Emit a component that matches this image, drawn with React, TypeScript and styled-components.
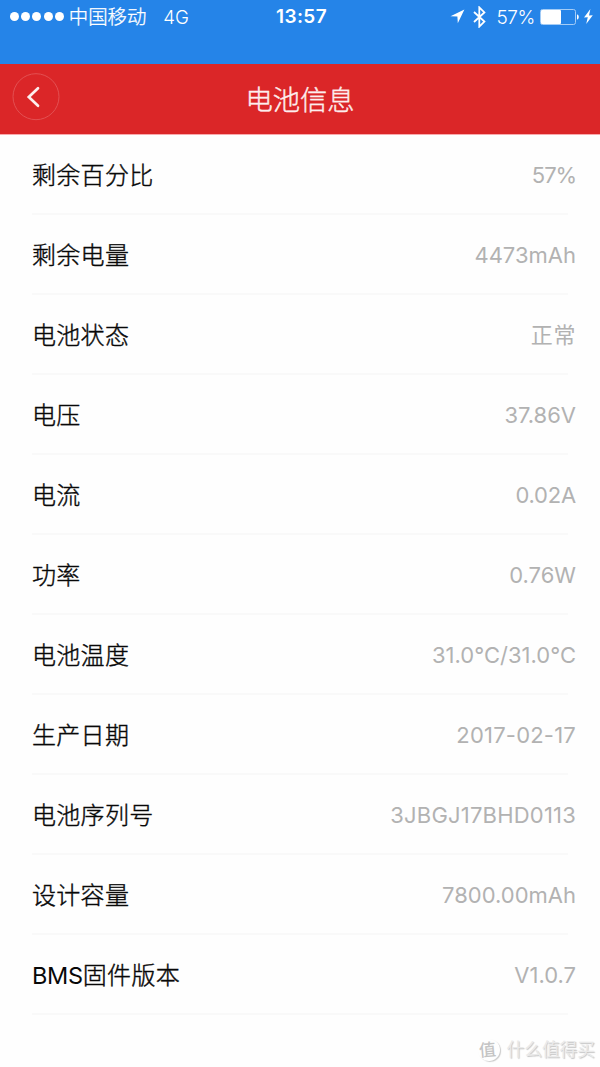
import React from "react";
import styled, { createGlobalStyle } from "styled-components";

const GlobalStyle = createGlobalStyle`
  * { box-sizing: border-box; }
  body {
    margin: 0;
    background: #fefefe;
    font-family: Inter, "Noto Sans CJK SC", sans-serif;
  }
`;

const Screen = styled.main`
  width: 600px;
  height: 1067px;
  display: flex;
  flex-direction: column;
  overflow: hidden;
`;

const StatusBar = styled.header`
  flex: none;
  height: 64px;
  padding: 0 7px 0 10px;
  display: grid;
  grid-template-columns: 1fr auto 1fr;
  align-items: start;
  background: #2584e8;
  color: #fff;
`;

const StatusGroup = styled.div<{ $end?: boolean }>`
  height: 33px;
  display: flex;
  align-items: center;
  justify-content: ${(p) => (p.$end ? "flex-end" : "flex-start")};
`;

const SignalDots = styled.div`
  display: flex;
  gap: 2.2px;
  margin-right: 5px;
`;

const Dot = styled.i`
  width: 9px;
  height: 9px;
  border-radius: 50%;
  background: #fff;
`;

const StatusText = styled.span<{ $size?: number; $gap?: number; $drop?: number; $tracking?: number }>`
  font-size: ${(p) => p.$size ?? 18}px;
  line-height: 33px;
  padding-top: ${(p) => p.$drop ?? 0}px;
  margin-right: ${(p) => p.$gap ?? 0}px;
  letter-spacing: ${(p) => p.$tracking ?? 0}px;
  white-space: nowrap;
  font-weight: 350;
`;

const Carrier = styled(StatusText)`
  font-weight: 300;
  -webkit-text-stroke: 0.3px currentColor;
`;

const Clock = styled.time`
  font-size: 19px;
  line-height: 34px;
  font-weight: 600;
  letter-spacing: 0.4px;
`;

const StatusIcon = styled.svg<{ $gap?: number }>`
  flex: none;
  display: block;
  margin-right: ${(p) => p.$gap ?? 0}px;
`;

const TitleBar = styled.div`
  flex: none;
  height: 71px;
  padding: 0 12px;
  display: grid;
  grid-template-columns: 48px 1fr 48px;
  background: #db2628;
  border-bottom: 1px solid #f9a9ac;
  color: #fdeeee;
`;

const BackButton = styled.button`
  width: 48px;
  height: 48px;
  margin-top: 9px;
  padding: 0;
  border: 0;
  background: none;
`;

const Title = styled.h1`
  margin: 0;
  font-size: 27.3px;
  line-height: 68px;
  font-weight: 300;
  -webkit-text-stroke: 0.4px currentColor;
  text-align: center;
  font-family: "Noto Sans CJK SC", sans-serif;
`;

const List = styled.dl`
  flex: none;
  margin: 0;
  padding: 0 32px;
`;

const Row = styled.div`
  height: 80px;
  display: flex;
  justify-content: space-between;
  border-bottom: 2px solid #f9f9f9;
`;

const Label = styled.dt`
  font-size: 24px;
  line-height: 82px;
  font-weight: 300;
  -webkit-text-stroke: 0.4px currentColor;
  letter-spacing: 0.3px;
  color: #080808;
  white-space: nowrap;
`;

const LatinPart = styled.span`
  font-size: 23.5px;
  font-weight: 400;
  -webkit-text-stroke: 0;
  letter-spacing: -0.3px;
`;

const Value = styled.dd<{ $tracking?: number }>`
  margin: 0 -8px 0 0;
  font-size: 22px;
  line-height: 80px;
  letter-spacing: ${(p) => p.$tracking ?? 0}px;
  color: #b2b2b2;
  white-space: nowrap;
`;

const Watermark = styled.footer`
  display: flex;
  align-items: center;
  justify-content: flex-end;
  gap: 7px;
  height: 24px;
  margin-top: 23px;
  padding-right: 5px;
  color: #eaeaea;
  text-shadow: 1px 1px 1px #c4c4c4;
  font-size: 17.7px;
  line-height: 24px;
`;

const WatermarkSeal = styled.span`
  width: 22px;
  height: 22px;
  border-radius: 50%;
  box-shadow: 1px 1px 1px #ccc;
  display: flex;
  align-items: center;
  justify-content: center;
  padding-right: 3px;
  font-size: 17px;
  line-height: 20px;
  font-weight: 500;
  color: #c4c4c4;
  text-shadow: none;
  transform: rotate(-5deg);
`;

interface Reading {
  prefix?: string;
  label: string;
  value: string;
  tracking?: number;
}

const readings: Reading[] = [
  { label: "剩余百分比", value: "57%", tracking: -1.1 },
  { label: "剩余电量", value: "4473mAh" },
  { label: "电池状态", value: "正常", tracking: 0.6 },
  { label: "电压", value: "37.86V" },
  { label: "电流", value: "0.02A", tracking: -0.2 },
  { label: "功率", value: "0.76W" },
  { label: "电池温度", value: "31.0°C/31.0°C" },
  { label: "生产日期", value: "2017-02-17", tracking: 0.2 },
  { label: "电池序列号", value: "3JBGJ17BHD0113", tracking: 0.2 },
  { label: "设计容量", value: "7800.00mAh" },
  { prefix: "BMS", label: "固件版本", value: "V1.0.7" },
];

export default function App() {
  return (
    <Screen>
      <GlobalStyle />
      <StatusBar>
        <StatusGroup>
          <SignalDots>
            {[0, 1, 2, 3, 4].map((n) => (
              <Dot key={n} />
            ))}
          </SignalDots>
          <Carrier $size={19.4} $gap={17} $drop={2}>中国移动</Carrier>
          <StatusText $size={18.7} $drop={1}>4G</StatusText>
        </StatusGroup>
        <Clock>13:57</Clock>
        <StatusGroup $end>
          <StatusIcon width="15" height="15" viewBox="0 0 15 15" $gap={8}>
            <path d="M14.4 0.6 L0.5 7.3 L7.4 7.6 L7.8 14.3 Z" fill="#fff" />
          </StatusIcon>
          <StatusIcon width="13" height="22" viewBox="0 0 13 22" $gap={10}>
            <path d="M1 6 L11.4 15.6 L6.3 20.6 V1.4 L11.4 6.4 L1 16" fill="none" stroke="#fff" strokeWidth="1.8" />
          </StatusIcon>
          <StatusText $size={19} $gap={5} $drop={1} $tracking={-0.4}>57%</StatusText>
          <StatusIcon width="39" height="16" viewBox="0 0 39 16" $gap={5}>
            <rect x="0.5" y="0.5" width="35" height="15" rx="2" fill="none" stroke="#a4ccf6" />
            <rect x="1" y="1" width="20" height="14" rx="1" fill="#fff" />
            <path d="M37 5.3 Q38.8 6 38.8 8 T37 10.7 Z" fill="#fff" />
          </StatusIcon>
          <StatusIcon width="9" height="15" viewBox="0 0 9 15">
            <path d="M6.4 0 L0 8.6 L3.8 8.3 L2.2 15 L8.8 6.2 L5 6.5 Z" fill="#fff" />
          </StatusIcon>
        </StatusGroup>
      </StatusBar>
      <TitleBar>
        <BackButton aria-label="返回">
          <svg width="48" height="48" viewBox="0 0 48 48">
            <circle cx="24" cy="23.7" r="23" fill="none" stroke="#e35052" />
            <path d="M26 15.2 L16.8 24 L26 32.8" fill="none" stroke="#fdeeee" strokeWidth="2.7" strokeLinecap="round" />
          </svg>
        </BackButton>
        <Title>电池信息</Title>
      </TitleBar>
      <List>
        {readings.map(({ prefix, label, value, tracking }) => (
          <Row key={label}>
            <Label>
              {prefix && <LatinPart>{prefix}</LatinPart>}
              {label}
            </Label>
            <Value $tracking={tracking}>{value}</Value>
          </Row>
        ))}
      </List>
      <Watermark>
        <WatermarkSeal>值</WatermarkSeal>
        <span>什么值得买</span>
      </Watermark>
    </Screen>
  );
}
